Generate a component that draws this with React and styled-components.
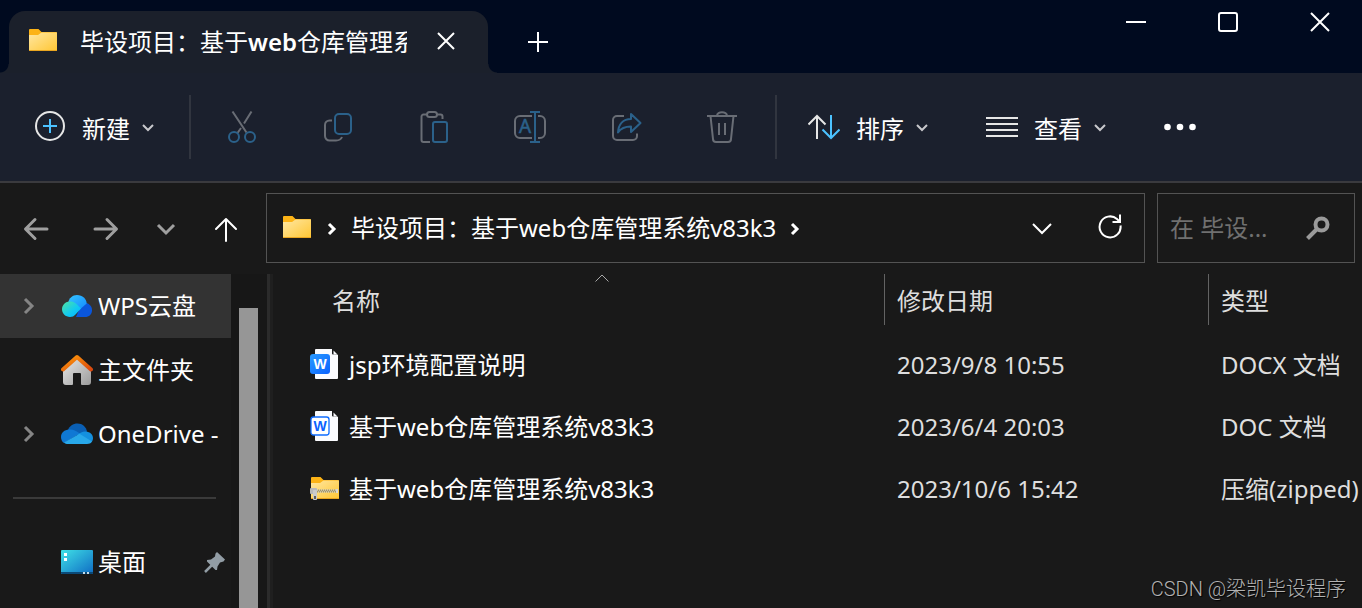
import React, { useState } from 'react';
import styled, { createGlobalStyle } from 'styled-components';

const GlobalStyle = createGlobalStyle`
  * { box-sizing: border-box; }
  body {
    margin: 0;
    background: #191919;
    color: #fff;
    font-family: "Noto Sans", "Noto Sans CJK SC", sans-serif;
    font-size: 24px;
    line-height: 32px;
  }
  button {
    border: 0;
    padding: 0;
    background: none;
    color: inherit;
    font: inherit;
  }
  svg { display: block; flex: none; }
`;

// 窗口
const Window = styled.div`
  position: relative;
  display: flex;
  flex-direction: column;
  min-height: 100vh;
  overflow: hidden;
`;

// 标题栏
const TitleBar = styled.header`
  display: flex;
  height: 73px;
  padding-left: 9px;
  background: #000a1f;
`;
const Tab = styled.div`
  position: relative;
  display: flex;
  align-items: center;
  width: 479px;
  margin-top: 11px;
  padding: 0 24px 2px 20px;
  border-radius: 16px 16px 0 0;
  background: #1b202b;

  &::before,
  &::after {
    content: "";
    position: absolute;
    bottom: 0;
    width: 9px;
    height: 9px;
  }
  &::before {
    right: 100%;
    background: radial-gradient(circle at 0 0, transparent 8px, #1b202b 9px);
  }
  &::after {
    left: 100%;
    background: radial-gradient(circle at 100% 0, transparent 8px, #1b202b 9px);
  }
`;
const TabTitle = styled.span`
  flex: 1;
  margin: 2px 21px 0 21px;
  overflow: hidden;
  white-space: nowrap;

  b { font-weight: 600; }
`;
const TabButton = styled.button`
  display: grid;
  place-items: center;
  width: ${(props) => (props.$wide ? '100px' : '36px')};
  height: ${(props) => (props.$wide ? '84px' : '36px')};
`;
const WindowControls = styled.div`
  display: flex;
  gap: 8px;
  margin-left: auto;
`;
const WindowButton = styled.button`
  display: grid;
  place-items: center;
  width: 84px;
  height: 44px;
`;

// 工具栏
const Toolbar = styled.div`
  display: flex;
  align-items: center;
  height: 110px;
  padding-left: 6px;
  border-bottom: 2px solid #3a3a3e;
  background: #1b202d;
`;
const ToolButton = styled.button`
  display: flex;
  align-items: center;
  gap: 12px;
  height: 64px;
  padding: 0 30px 0 28px;
  white-space: nowrap;
`;
const ToolText = styled.span`
  margin-left: 4px;
  padding-top: 4px;
`;
const IconButton = styled.button`
  display: grid;
  place-items: center;
  width: ${(props) => props.$width || 96}px;
  height: 64px;
`;
const Divider = styled.span`
  width: 2px;
  height: 64px;
  margin: 0 3px 0 5px;
  background: #31353f;
`;

// 地址栏
const NavBar = styled.nav`
  display: flex;
  padding: 10px 7px 11px 0;
`;
const NavButtons = styled.div`
  display: grid;
  grid-template-columns: 72px 68px 52px 68px;
  margin-right: 6px;
`;
const NavButton = styled.button`
  display: grid;
  place-items: center;
  padding-top: 2px;
`;
const AddressBar = styled.div`
  display: flex;
  flex: 1;
  align-items: center;
  height: 70px;
  padding-left: 16px;
  border: 1px solid #535353;
`;
const Crumb = styled.button`
  display: flex;
  align-items: center;
  height: 68px;
  white-space: nowrap;
`;
const CrumbArrow = styled.span`
  display: grid;
  place-items: center;
  width: 38px;
  padding-top: 2px;
`;
const AddressActions = styled.div`
  display: flex;
  margin-left: auto;
`;
const SearchBox = styled.label`
  display: flex;
  align-items: center;
  width: 198px;
  margin-left: 12px;
  padding: 0 24px 0 12px;
  border: 1px solid #535353;
`;
const SearchInput = styled.input`
  flex: 1;
  min-width: 0;
  padding: 0;
  border: 0;
  outline: 0;
  background: none;
  color: #fff;
  font: inherit;

  &::placeholder { color: #707070; }
`;

// 主体
const Body = styled.div`
  display: flex;
  flex: 1;
`;
const Sidebar = styled.aside`
  width: 231px;
`;
const SideItem = styled.button`
  display: flex;
  align-items: center;
  width: 100%;
  height: 64px;
  padding: 0 5px 0 21px;
  background: ${(props) => (props.$active ? '#333333' : 'none')};
  white-space: nowrap;
`;
const Expander = styled.span`
  display: grid;
  place-items: center;
  width: 16px;
  margin-right: 24px;
`;
const SideText = styled.span`
  flex: 1;
  margin-left: 5px;
  overflow: hidden;
  text-align: left;
`;
const SideLine = styled.hr`
  height: 2px;
  margin: 31px 15px 31px 13px;
  border: 0;
  background: #3a3a3a;
`;
const ScrollTrack = styled.div`
  display: flex;
  width: 36px;
  padding: 34px 9px 0 8px;
  background: #171717;
`;
const ScrollThumb = styled.div`
  flex: 1;
  background: #969696;
`;
const Splitter = styled.div`
  width: 6px;
  border-left: 3px solid #2b2b2b;
  background: #1f1f1f;
`;

// 文件列表
const FilePane = styled.main`
  flex: 1;
  min-width: 0;
`;
const FileTable = styled.table`
  width: 100%;
  table-layout: fixed;
  border-collapse: collapse;
  color: #dedede;
`;
const HeadCell = styled.th`
  width: ${(props) => props.$width || 'auto'};
  height: 60px;
  padding: 0 0 0 ${(props) => (props.$first ? '47px' : '0')};
  font-weight: 400;
  vertical-align: top;
`;
const HeadButton = styled.button`
  position: relative;
  display: block;
  width: 100%;
  height: 51px;
  padding: 2px 0 0 12px;
  border-left: ${(props) => (props.$line ? '1px solid #636363' : '0')};
  text-align: left;
`;
const SortMark = styled.span`
  position: absolute;
  top: 0;
  left: 50%;
  margin-left: -7px;
`;
const Cell = styled.td`
  height: 62px;
  padding: 0 0 0 13px;
  overflow: hidden;
  white-space: nowrap;
`;
const NameCell = styled(Cell)`
  padding-left: 37px;
  color: #fff;
`;
const FileName = styled.div`
  display: flex;
  align-items: center;
  gap: 9px;
`;
const Watermark = styled.div`
  position: absolute;
  right: 16px;
  bottom: 5px;
  color: #b2b2b2;
  font: 300 20px/28px Roboto, "Noto Sans CJK SC", sans-serif;
  text-shadow: 1px 1px 1px #000;
`;

// 线条图标
function Line({ w = 32, h = 32, color = '#e6e6e6', sw = 2, round, children }) {
  const cap = round ? 'round' : 'butt';
  return (
    <svg width={w} height={h} viewBox={`0 0 ${w} ${h}`} fill="none" stroke={color}
      strokeWidth={sw} strokeLinecap={cap} strokeLinejoin={round ? 'round' : 'miter'} aria-hidden="true">
      {children}
    </svg>
  );
}

const blue = '#2b618a';
const gray = '#696d75';

const SmallDown = () => (
  <Line w={12} h={12} color="#c8c8cc" sw={2}><path d="M1 4l5 5 5-5" /></Line>
);
const Cross = ({ size }) => (
  <Line w={size} h={size} color="#fff" sw={2}>
    <path d={`M1 1l${size - 2} ${size - 2}M${size - 1} 1L1 ${size - 1}`} />
  </Line>
);

function FolderIcon({ id, zip }) {
  return (
    <svg width="30" height="26" viewBox="0 0 30 26" aria-hidden="true">
      <defs>
        <linearGradient id={id} x1="0" y1="0" x2="1" y2="1">
          <stop offset="0" stopColor="#ffe7a2" />
          <stop offset="1" stopColor="#ffc633" />
        </linearGradient>
      </defs>
      <g transform={zip ? 'translate(1 0)' : undefined}>
        <path d="M0 2a1 1 0 0 1 1-1h8.500l3 3H27a1 1 0 0 1 1 1v17H0z" fill="#fcb316" />
        <path d="M0 7h9l3.500-2.500H28V22a1 1 0 0 1-1 1H1a1 1 0 0 1-1-1z" fill={`url(#${id})`} />
        <path d="M0 22.500h28" stroke="#e9a520" />
      </g>
      {zip && (
        <g>
          <path d="M6 15h22" stroke="#a3966c" strokeWidth="3" />
          <path d="M7 14h21M8 16h20" stroke="#f1ecd9" strokeDasharray="1 1" />
          <rect x="0" y="12" width="7" height="6" rx="1" fill="#b9b9b9" />
          <rect x="3" y="14" width="4" height="10" rx="1" fill="#cbcbcb" />
          <rect x="4" y="20" width="2" height="3" fill="#5b5b5b" />
          <path d="M27 13v4" stroke="#d6d6d6" strokeWidth="2" />
        </g>
      )}
    </svg>
  );
}

function DocIcon({ id, outline }) {
  return (
    <svg width="30" height="34" viewBox="0 0 30 34" aria-hidden="true">
      <defs>
        <linearGradient id={id} x1="0" y1="0" x2="1" y2="1">
          <stop offset="0" stopColor="#2a9bff" />
          <stop offset="1" stopColor="#0a62ff" />
        </linearGradient>
      </defs>
      <path d="M6 1h16l6 6v23a1 1 0 0 1-1 1H6a1 1 0 0 1-1-1V2a1 1 0 0 1 1-1z" fill="#fbfcff" />
      <path d="M22 0.500h6V6.500h-5a1 1 0 0 1-1-1z" fill="#191919" />
      <path d="M23.500 2.500l4 4h-4z" fill="#fbfcff" />
      {outline
        ? <rect x="1" y="7" width="18" height="18" rx="2.500" fill="#fff" stroke="#0f6cff" strokeWidth="1.300" />
        : <rect x="0" y="6" width="20" height="20" rx="3" fill={`url(#${id})`} />}
      <text x="10" y="21" textAnchor="middle" fontFamily="Liberation Sans" fontWeight="700" fontSize="14"
        fill={outline ? '#0a62ff' : '#fff'}>W</text>
    </svg>
  );
}

const WpsCloud = () => (
  <svg width="32" height="32" viewBox="0 0 32 32" aria-hidden="true">
    <defs>
      <linearGradient id="wpsLeft" x1="0" y1="0" x2="1" y2="1">
        <stop offset="0" stopColor="#4fe3a0" />
        <stop offset="0.600" stopColor="#10c8f4" />
        <stop offset="1" stopColor="#00b4ff" />
      </linearGradient>
      <linearGradient id="wpsTop" x1="0" y1="0" x2="1" y2="1">
        <stop offset="0" stopColor="#35c6ff" />
        <stop offset="1" stopColor="#1287ff" />
      </linearGradient>
    </defs>
    <path d="M15 27l6-14c6-1 10 2.500 10 7.200 0 4-3 6.800-7 6.800z" fill="#0a56db" />
    <path d="M7 13C8 8 11.500 5 16 5c5.500 0 9.500 4 9.700 8.500L17 21z" fill="url(#wpsTop)" />
    <path d="M9 11.500c4 0 6 2 8 4l3 3-5.500 6c-1.600 1.700-3 2.500-5.500 2.500-4.500 0-8-3.300-8-7.700s3.500-7.800 8-7.800z" fill="url(#wpsLeft)" />
  </svg>
);

const HomeIcon = () => (
  <svg width="32" height="32" viewBox="0 0 32 32" aria-hidden="true">
    <defs>
      <linearGradient id="homeWall" x1="0" y1="0" x2="1" y2="1">
        <stop offset="0" stopColor="#e9e9e9" />
        <stop offset="1" stopColor="#9c9c9c" />
      </linearGradient>
      <linearGradient id="homeRoof" x1="0" y1="0" x2="1" y2="1">
        <stop offset="0" stopColor="#ff9a0a" />
        <stop offset="1" stopColor="#d9480f" />
      </linearGradient>
    </defs>
    <path d="M2 14L16 3l14 11v14a3 3 0 0 1-3 3h-6a1 1 0 0 1-1-1V20a1 1 0 0 0-1-1h-6a1 1 0 0 0-1 1v10a1 1 0 0 1-1 1H5a3 3 0 0 1-3-3z" fill="url(#homeWall)" />
    <path d="M2 15.500L16 3l14 12.500" fill="none" stroke="url(#homeRoof)" strokeWidth="4" strokeLinecap="round" strokeLinejoin="round" />
  </svg>
);

const OneDriveIcon = () => (
  <svg width="32" height="32" viewBox="0 0 32 32" aria-hidden="true">
    <path d="M7 12c1.500-4 5-6.500 9.500-6.500 5 0 8.500 3.500 9.500 8L17 17z" fill="#0a5fb4" />
    <path d="M8 11.500c4-.5 6 .8 11 4L3 25C1 24 0 21.500 0 19c0-4.200 3.500-7.300 8-7.500z" fill="#0f78d4" />
    <path d="M16 17.500c4-4 7.500-4.500 11-3.500 3 .8 5 3 5 6 0 1.500-.4 3-1.500 4z" fill="#1490df" />
    <path d="M3 24.500l15.500-8.700L31 23.500c-1 1.800-2.800 2.500-5 2.500H7c-1.600 0-3-.5-4-1.500z" fill="#28a8ea" />
  </svg>
);

const DesktopIcon = () => (
  <svg width="32" height="32" viewBox="0 0 32 32" aria-hidden="true">
    <defs>
      <linearGradient id="desk" x1="0" y1="0" x2="1" y2="1">
        <stop offset="0" stopColor="#3fe0e6" />
        <stop offset="1" stopColor="#0f6cc4" />
      </linearGradient>
    </defs>
    <rect y="4" width="32" height="24" rx="1" fill="url(#desk)" />
    <path d="M0 26h32v1a1 1 0 0 1-1 1H1a1 1 0 0 1-1-1z" fill="#0b4a78" />
    <path d="M3 7h3v3H3zM3 12h3v3H3z" fill="#fff" />
    <path d="M22 26h2v2h-2zM26 26h2v2h-2z" fill="#c4dcec" />
  </svg>
);

const PinIcon = () => (
  <svg width="22" height="22" viewBox="0 0 22 22" aria-hidden="true">
    <path d="M13 1l8 7.500-1.500 2-3.500 1-2.500 4-.5 3.500h-1.500L3 10.500V9l4-.5 4-3 .5-3z" fill="#929da5" />
    <path d="M8 14l-7 7" stroke="#929da5" strokeWidth="2.500" />
  </svg>
);

const BoldRight = ({ color = '#858585' }) => (
  <Line w={12} h={18} color={color} sw={3}><path d="M2 2l7 7-7 7" /></Line>
);
const CrumbRight = () => (
  <Line w={10} h={14} color="#fff" sw={3}><path d="M2 2l5 5-5 5" /></Line>
);

// 工具栏中间的图标
const tools = [
  {
    name: '剪切',
    icon: <><path d="M6.500 0.500L20.500 21.500M25.500 0.500l-7.500 12M15 17l-3.500 5" /><g stroke={blue}><circle cx="8" cy="26" r="5" /><circle cx="24" cy="26" r="5" /></g></>,
  },
  {
    name: '复制',
    icon: <><path d="M10 9.500H7.500A4.500 4.500 0 0 0 3 14v11a4.500 4.500 0 0 0 4.500 4.500H14c3 0 5-1 6-3.500" /><rect x="13" y="3" width="16" height="20" rx="4" stroke={blue} /></>,
  },
  {
    name: '粘贴',
    icon: <><path d="M9 3.500H5.500a2 2 0 0 0-2 2V29a2 2 0 0 0 2 2H12M19 3.500h3.500a2 2 0 0 1 2 2V8" /><rect x="9" y="1" width="10" height="5" rx="2.500" /><rect x="15" y="11" width="14" height="20" rx="2" stroke={blue} /></>,
  },
  {
    name: '重命名',
    icon: <><path d="M18 5H6a5 5 0 0 0-5 5v12a5 5 0 0 0 5 5h12M24 5h2a5 5 0 0 1 5 5v12a5 5 0 0 1-5 5h-2" /><path d="M16 1h10M21 1v30M16 31h10" stroke={blue} /><text x="11" y="22" textAnchor="middle" fontFamily="Noto Sans" fontSize="19" fill={blue} stroke={blue} strokeWidth="0.500">A</text></>,
  },
  {
    name: '共享',
    icon: <><path d="M14 5H7a4 4 0 0 0-4 4v16a4 4 0 0 0 4 4h16a4 4 0 0 0 4-4v-2.500" /><path d="M21 3l9.500 9-9.500 9v-5.500c-6 0-10 1.500-13 6 .5-8 5-13.500 13-13.500z" stroke={blue} strokeLinejoin="round" /></>,
  },
  {
    name: '删除',
    icon: <path d="M1 5h30M11 5c0-5 10-5 10 0M4.500 5L7 28a3 3 0 0 0 3 3h12a3 3 0 0 0 3-3l2.500-23M13 12v12M19 12v12" />,
  },
];

const places = [
  { name: 'WPS云盘', icon: <WpsCloud />, expand: true },
  { name: '主文件夹', icon: <HomeIcon /> },
  { name: 'OneDrive -', icon: <OneDriveIcon />, expand: true },
];

const files = [
  { name: 'jsp环境配置说明', date: '2023/9/8 10:55', type: 'DOCX 文档', icon: <DocIcon id="docx" /> },
  { name: '基于web仓库管理系统v83k3', date: '2023/6/4 20:03', type: 'DOC 文档', icon: <DocIcon id="doc" outline /> },
  { name: '基于web仓库管理系统v83k3', date: '2023/10/6 15:42', type: '压缩(zipped)', icon: <FolderIcon id="zip" zip /> },
];

function SideRow({ name, icon, expand, pinned, active, onClick }) {
  return (
    <SideItem $active={active} onClick={onClick}>
      <Expander>{expand && <BoldRight />}</Expander>
      {icon}
      <SideText>{name}</SideText>
      {pinned && <PinIcon />}
    </SideItem>
  );
}

function App() {
  const [current, setCurrent] = useState('WPS云盘');
  const [keyword, setKeyword] = useState('');

  return (
    <Window lang="zh-CN">
      <GlobalStyle />
      <TitleBar>
        <Tab>
          <FolderIcon id="tabFolder" />
          <TabTitle>毕设项目：基于<b>web</b>仓库管理系</TabTitle>
          <TabButton aria-label="关闭标签页"><Cross size={18} /></TabButton>
        </Tab>
        <TabButton $wide aria-label="新建标签页">
          <Line w={20} h={20} color="#fff" sw={2}><path d="M10 0v20M0 10h20" /></Line>
        </TabButton>
        <WindowControls>
          <WindowButton aria-label="最小化"><Line w={20} h={20} color="#fff"><path d="M0 10h20" /></Line></WindowButton>
          <WindowButton aria-label="最大化"><Line w={20} h={20} color="#fff"><rect x="1" y="1" width="18" height="18" rx="2" /></Line></WindowButton>
          <WindowButton aria-label="关闭"><Cross size={20} /></WindowButton>
        </WindowControls>
      </TitleBar>

      <Toolbar>
        <ToolButton>
          <Line>
            <circle cx="16" cy="15" r="14" />
            <path d="M16 8v14M9 15h14" stroke="#4cc2ff" />
          </Line>
          <ToolText>新建</ToolText>
          <SmallDown />
        </ToolButton>
        <Divider />
        {tools.map((tool) => (
          <IconButton key={tool.name} aria-label={tool.name}>
            <Line color={gray}>{tool.icon}</Line>
          </IconButton>
        ))}
        <Divider />
        <ToolButton>
          <Line>
            <path d="M9 28V5M0.500 13.500L9 5l8.500 8.500" />
            <path d="M23 4v23M14.500 18.500L23 27l8.500-8.500" stroke="#4cc2ff" />
          </Line>
          <ToolText>排序</ToolText>
          <SmallDown />
        </ToolButton>
        <ToolButton>
          <Line><path d="M0 7h32M0 13h32M0 19h32M0 25h32" /></Line>
          <ToolText>查看</ToolText>
          <SmallDown />
        </ToolButton>
        <IconButton $width={88} aria-label="更多">
          <svg width="32" height="8" viewBox="0 0 32 8" fill="#fff" aria-hidden="true">
            <circle cx="3.500" cy="4" r="3.300" />
            <circle cx="16" cy="4" r="3.300" />
            <circle cx="28.500" cy="4" r="3.300" />
          </svg>
        </IconButton>
      </Toolbar>

      <NavBar>
        <NavButtons>
          <NavButton aria-label="后退"><Line w={26} h={26} color="#9f9f9f" sw={3} round><path d="M24 13H3M12 3.500L2.500 13l9.500 9.500" /></Line></NavButton>
          <NavButton aria-label="前进"><Line w={26} h={26} color="#9f9f9f" sw={3} round><path d="M2 13h21M14 3.500l9.500 9.500-9.500 9.500" /></Line></NavButton>
          <NavButton aria-label="最近浏览的位置"><Line w={20} h={16} color="#9f9f9f" sw={3}><path d="M2 4l8 8 8-8" /></Line></NavButton>
          <NavButton aria-label="上移一级"><Line w={24} h={26} color="#fff" round><path d="M12 25V3M2 13L12 3l10 10" /></Line></NavButton>
        </NavButtons>
        <AddressBar>
          <FolderIcon id="pathFolder" />
          <CrumbArrow><CrumbRight /></CrumbArrow>
          <Crumb>毕设项目：基于web仓库管理系统v83k3</Crumb>
          <CrumbArrow><CrumbRight /></CrumbArrow>
          <AddressActions>
            <IconButton $width={68} aria-label="历史记录"><Line w={20} h={14} color="#fff"><path d="M1 3l9 9 9-9" /></Line></IconButton>
            <IconButton $width={68} aria-label="刷新">
              <Line w={24} h={28} color="#fff">
                <path d="M22.500 11.500A10.500 10.500 0 1 1 19 5l3 3M22 0.500V8h-7.500" />
              </Line>
            </IconButton>
          </AddressActions>
        </AddressBar>
        <SearchBox>
          <SearchInput aria-label="搜索" placeholder="在 毕设..." value={keyword} onChange={(e) => setKeyword(e.target.value)} />
          <Line w={24} h={24} color="#9a9a9a" sw={4}>
            <circle cx="15.500" cy="8.500" r="6" />
            <path d="M11 13l-9.500 9.500" />
          </Line>
        </SearchBox>
      </NavBar>

      <Body>
        <Sidebar>
          {places.map((place) => (
            <SideRow key={place.name} {...place} active={current === place.name} onClick={() => setCurrent(place.name)} />
          ))}
          <SideLine />
          <SideRow name="桌面" icon={<DesktopIcon />} pinned active={current === '桌面'} onClick={() => setCurrent('桌面')} />
        </Sidebar>
        <ScrollTrack><ScrollThumb /></ScrollTrack>
        <Splitter />
        <FilePane>
          <FileTable>
            <thead>
              <tr>
                <HeadCell $first>
                  <HeadButton>
                    名称
                    <SortMark><Line w={14} h={9} color="#a8a8a8" sw={1}><path d="M0.500 7.500L7 1l6.500 6.500" /></Line></SortMark>
                  </HeadButton>
                </HeadCell>
                <HeadCell $width="324px"><HeadButton $line>修改日期</HeadButton></HeadCell>
                <HeadCell $width="154px"><HeadButton $line>类型</HeadButton></HeadCell>
              </tr>
            </thead>
            <tbody>
              {files.map((file) => (
                <tr key={file.date}>
                  <NameCell><FileName>{file.icon}{file.name}</FileName></NameCell>
                  <Cell>{file.date}</Cell>
                  <Cell>{file.type}</Cell>
                </tr>
              ))}
            </tbody>
          </FileTable>
        </FilePane>
      </Body>
      <Watermark>CSDN @梁凯毕设程序</Watermark>
    </Window>
  );
}

export default App;
